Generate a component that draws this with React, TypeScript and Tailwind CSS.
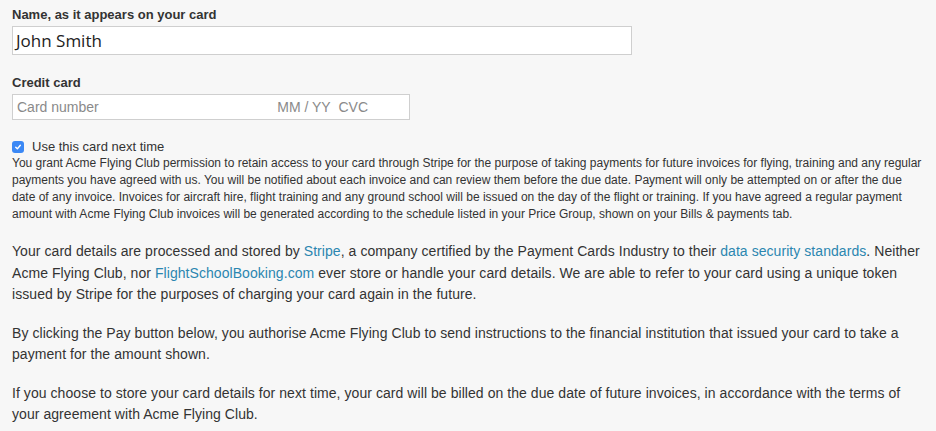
export default function App() {
  return (
    <div className="min-h-screen bg-[#f7f7f7] px-3 pt-[6px] text-[#333] font-['Liberation_Sans',Arial,sans-serif]">
      {/* Name */}
      <label className="block text-[13px] font-bold leading-[18px] text-[#333]">
        Name, as it appears on your card
      </label>
      <div className="mt-[2px] flex h-[29px] w-[620px] items-center border border-[#cfcfcf] bg-white px-[3px] font-['Open_Sans',sans-serif] text-[17px] text-[#222]">
        John Smith
      </div>

      {/* Credit card */}
      <label className="mt-[19px] block text-[13px] font-bold leading-[18px] text-[#333]">
        Credit card
      </label>
      <div className="mt-[2px] flex h-[26px] w-[398px] items-center border border-[#cfcfcf] bg-white pl-[4px] text-[14px] text-[#8a8a8a]">
        <span className="flex-1">Card number</span>
        <span className="mr-[41px]">MM / YY&nbsp;&nbsp;CVC</span>
      </div>

      {/* Save card */}
      <div className="mt-[18px] flex h-[17px] items-center gap-[8px]">
        <span className="flex h-[12px] w-[12px] items-center justify-center rounded-[3px] bg-[#3b88f5]">
          <svg width="8" height="8" viewBox="0 0 10 10" fill="none" stroke="white" strokeWidth="1.8" strokeLinecap="round" strokeLinejoin="round">
            <path d="M2.2 5.3 L4.2 7.3 L7.9 2.8" />
          </svg>
        </span>
        <span className="text-[13px] text-[#333]">Use this card next time</span>
      </div>
      <p className="-mr-[4px] text-[12px] leading-[17px] text-[#333]">
        You grant Acme Flying Club permission to retain access to your card through Stripe for the purpose of taking payments for future invoices for flying, training and any regular payments you have agreed with us. You will be notified about each invoice and can review them before the due date. Payment will only be attempted on or after the due date of any invoice. Invoices for aircraft hire, flight training and any ground school will be issued on the day of the flight or training. If you have agreed a regular payment amount with Acme Flying Club invoices will be generated according to the schedule listed in your Price Group, shown on your Bills &amp; payments tab.
      </p>

      <div className="mt-[18px] flex flex-col gap-[17px] text-[14px] leading-[21.5px] tracking-[0.06px] text-[#333]">
        <p>
          Your card details are processed and stored by <a className="text-[#2b86b0]">Stripe</a>, a company certified by the Payment Cards Industry to their <a className="text-[#2b86b0]">data security standards</a>. Neither Acme Flying Club, nor <a className="text-[#2b86b0]">FlightSchoolBooking.com</a> ever store or handle your card details. We are able to refer to your card using a unique token issued by Stripe for the purposes of charging your card again in the future.
        </p>
        <p>
          By clicking the Pay button below, you authorise Acme Flying Club to send instructions to the financial institution that issued your card to take a payment for the amount shown.
        </p>
        <p>
          If you choose to store your card details for next time, your card will be billed on the due date of future invoices, in accordance with the terms of your agreement with Acme Flying Club.
        </p>
      </div>
    </div>
  );
}
